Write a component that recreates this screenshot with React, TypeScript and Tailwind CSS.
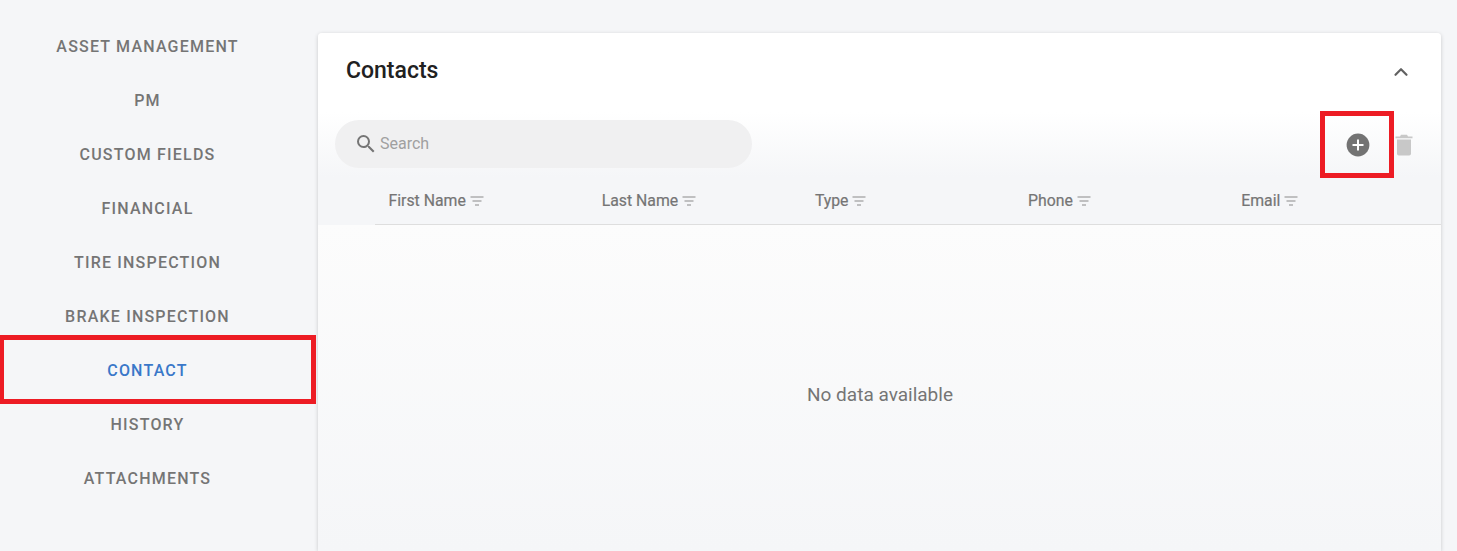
import React from 'react';
import { ChevronUp } from 'lucide-react';

const TABS = ['ASSET MANAGEMENT', 'PM', 'CUSTOM FIELDS', 'FINANCIAL', 'TIRE INSPECTION', 'BRAKE INSPECTION', 'CONTACT', 'HISTORY', 'ATTACHMENTS'];
const COLUMNS = ['First Name', 'Last Name', 'Type', 'Phone', 'Email'];

const FilterIcon = () => (
    <svg width="14" height="10" viewBox="0 0 14 10" className="ml-[4px] mt-[0px]">
        <path d="M0.5 1h13M2.5 5h9M5 9h4" stroke="#8a8a8a" strokeWidth="1" fill="none" />
    </svg>
);

export default function App() {
    return (
        <div className="relative h-[551px] w-[1457px] overflow-hidden bg-[#f5f6f8] font-['Roboto',sans-serif]">
            <div className="flex h-full gap-[23px] pt-[19px]">

                {/* Tabs */}
                <div className="flex w-[295px] shrink-0 flex-col">
                    {TABS.map((tab) => (
                        <div
                            key={tab}
                            className={`flex h-[54px] items-center justify-center pt-[2px] text-[16px] font-medium tracking-[1.2px] ${tab === 'CONTACT' ? 'text-[#3a78c9]' : 'text-[#757575]'}`}
                        >
                            {tab}
                        </div>
                    ))}
                </div>

                {/* Contacts card */}
                <div className="mt-[14px] flex w-[1123px] shrink-0 flex-col rounded-t-[4px] bg-[#f5f6f8] shadow-[0_1px_4px_rgba(0,0,0,0.18)]">
                    <div className="rounded-t-[4px] bg-gradient-to-b from-white from-[55%] to-[#f5f6f8]">
                        <div className="flex h-[75px] items-center justify-between pl-[28px] pr-[29px] pt-[2px]">
                            <h2 className="text-[23px] font-medium text-[#212121]">Contacts</h2>
                            <ChevronUp size={22} strokeWidth={2.4} className="text-[#616161]" />
                        </div>
                        <div className="flex h-[69px] items-start justify-between pl-[17px] pr-[28px] pt-[12px]">
                            <div className="flex h-[48px] w-[417px] items-center rounded-full bg-[#f0f0f1] pl-[19px]">
                                <svg width="24" height="24" viewBox="0 0 24 24" fill="#757575">
                                    <path d="M15.5 14h-.79l-.28-.27A6.47 6.47 0 0 0 16 9.5 6.5 6.5 0 1 0 9.5 16c1.61 0 3.09-.59 4.23-1.57l.27.28v.79l5 4.99L20.49 19l-4.99-5zm-6 0C7.01 14 5 11.99 5 9.5S7.01 5 9.5 5 14 7.01 14 9.5 11.99 14 9.5 14z" />
                                </svg>
                                <span className="ml-[2px] text-[16px] text-[#a0a0a0]">Search</span>
                            </div>
                            <div className="flex items-start gap-[25px] pt-[12px]">
                                <svg width="24" height="24" viewBox="0 0 24 24" className="mt-[1px]">
                                    <circle cx="12" cy="12" r="11.4" fill="#737373" />
                                    <path d="M12 6.5v11M6.5 12h11" stroke="#fff" strokeWidth="2" />
                                </svg>
                                <svg width="18" height="22" viewBox="0 0 18 22" fill="#c8c8c8" className="mt-[2px]">
                                    <path d="M0.5 2.5h17v1.8H.5zM6 .8h6l1 1.7H5zM2 5.5h14v14.2a1.8 1.8 0 0 1-1.8 1.8H3.8A1.8 1.8 0 0 1 2 19.700z" />
                                </svg>
                            </div>
                        </div>
                    </div>

                    {/* Table head */}
                    <div className="ml-[57px] flex h-[48px] items-center border-b border-[#dedede] pt-[1px]">
                        {COLUMNS.map((col) => (
                            <div key={col} className="flex w-[213.2px] items-center pl-[13.5px] text-[15.8px] font-normal text-[#757575] [-webkit-text-stroke:0.2px_#757575]">
                                {col}
                                <FilterIcon />
                            </div>
                        ))}
                    </div>

                    <div className="flex flex-1 justify-center bg-gradient-to-b from-[#fcfcfc] to-[#f5f6f8] pl-[1px] pt-[156px] text-[19px] text-[#757575]">
                        No data available
                    </div>
                </div>
            </div>

            {/* Red annotation boxes */}
            <div className="absolute left-[-1px] top-[335px] h-[69px] w-[317px] border-[5px] border-[#ed1c24]" />
            <div className="absolute left-[1320px] top-[111px] h-[67px] w-[74px] border-[5px] border-[#ed1c24]" />
        </div>
    );
}
